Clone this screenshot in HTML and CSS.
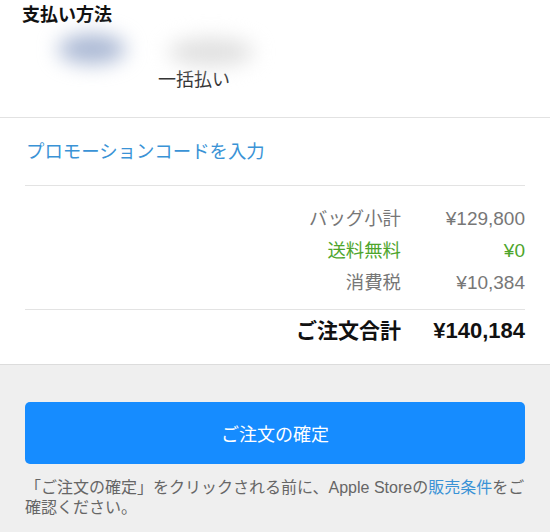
FILE: index.html
```html
<!DOCTYPE html>
<html lang="ja">
<head>
  <meta charset="UTF-8" />
  <title>ご注文の確認</title>
  <link rel="stylesheet" href="styles.css">
</head>
<body>
  <div class="sheet">
    <div class="pay">
      <h2>支払い方法</h2>
      <div class="card">
        <span class="blob blue"></span>
        <span class="blob grey"></span>
      </div>
      <div class="plan">一括払い</div>
    </div>

    <div class="promo">
      <a href="#">プロモーションコードを入力</a>
    </div>

    <div class="summary">
      <div class="rows">
        <div class="row"><span class="label">バッグ小計</span><span class="val">¥129,800</span></div>
        <div class="row free"><span class="label">送料無料</span><span class="val">¥0</span></div>
        <div class="row"><span class="label">消費税</span><span class="val">¥10,384</span></div>
      </div>
      <div class="row total"><span class="label">ご注文合計</span><span class="val">¥140,184</span></div>
    </div>
  </div>

  <div class="checkout">
    <button class="order">ご注文の確定</button>
    <p class="note">「ご注文の確定」をクリックされる前に、Apple Storeの<a href="#">販売条件</a>をご確認ください。</p>
  </div>
</body>
</html>
```

FILE: styles.css
```css
body {
  margin: 0;
  background: #efefef;
  font-family: "Liberation Sans", "Noto Sans CJK JP", sans-serif;
  color: #333;
}
.sheet {
  background: white;
  border-bottom: 1px solid #dcdcdc;
}
.pay {
  padding: 4px 22px 25px;
  border-bottom: 1px solid #e2e2e2;
}
.pay h2 {
  margin: 0;
  font-size: 18px;
  line-height: 22px;
  color: #111;
}
.card {
  position: relative;
  height: 42px;
}
.blob {
  position: absolute;
  border-radius: 50%;
  filter: blur(10px);
}
.blob.blue { left: 36px; top: 8px; width: 68px; height: 30px; background: #aab8d4; }
.blob.grey { left: 146px; top: 12px; width: 86px; height: 28px; background: #e0e0e0; }
.plan {
  margin-left: 136px;
  font-size: 18px;
  line-height: 24px;
  color: #333;
}
.promo {
  margin: 0 25px;
  padding: 22px 0 20px;
  line-height: 24px;
  border-bottom: 1px solid #e3e3e3;
}
.promo a {
  margin-left: 1px;
  font-size: 18.4px;
  color: #3a93d6;
  text-decoration: none;
}
.summary {
  margin: 0 25px;
  padding-bottom: 12px;
}
.rows {
  padding: 17px 0 10px;
  border-bottom: 1px solid #e3e3e3;
}
.row {
  display: flex;
  justify-content: flex-end;
  font-size: 18.4px;
  line-height: 32px;
  color: #777;
}
.row .val {
  width: 124px;
  font-size: 19px;
  text-align: right;
}
.row.free { color: #4ea52c; }
.row.total {
  font-size: 21px;
  line-height: 42px;
  font-weight: bold;
  color: #111;
}
.row.total .val { font-size: 22px; }
.checkout {
  padding: 37px 25px 0;
}
.order {
  display: block;
  width: 100%;
  height: 62px;
  border: none;
  border-radius: 5px;
  background: #168cff;
  color: white;
  font-family: inherit;
  font-size: 18px;
}
.note {
  margin: 14px 0 0;
  font-size: 16px;
  line-height: 20px;
  color: #666;
}
.note a {
  color: #3a93d6;
  text-decoration: none;
}
```
